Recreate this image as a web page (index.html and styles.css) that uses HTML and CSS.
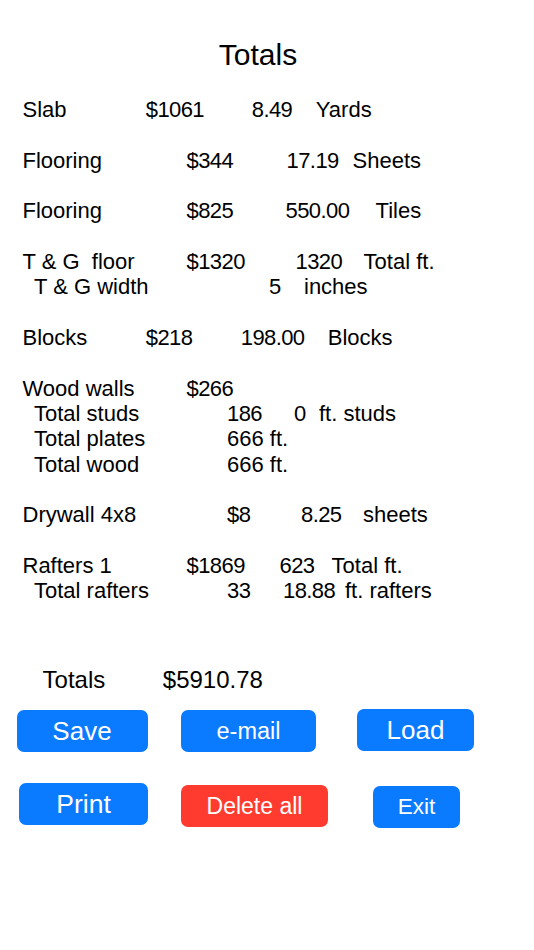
FILE: index.html
```html
<!DOCTYPE html>
<html>
<head>
    <meta charset="UTF-8">
    <title>Totals</title>
    <link rel="stylesheet" href="styles.css">
</head>
<body>
    <div class="page">
        <h1 class="title">Totals</h1>

        <!-- Lista de materiales: cada bloque es un grupo separado por una linea en blanco -->
        <div class="lista">
            <div class="grupo">
                <div class="linea">
                    <span class="celda w123">Slab</span>
                    <span class="celda num w106">$1061</span>
                    <span class="celda num w64">8.49</span>
                    <span class="celda">Yards</span>
                </div>
            </div>
            <div class="grupo">
                <div class="linea">
                    <span class="celda w164">Flooring</span>
                    <span class="celda num w100">$344</span>
                    <span class="celda num w66">17.19</span>
                    <span class="celda">Sheets</span>
                </div>
            </div>
            <div class="grupo">
                <div class="linea">
                    <span class="celda w164">Flooring</span>
                    <span class="celda num w99">$825</span>
                    <span class="celda num w90">550.00</span>
                    <span class="celda">Tiles</span>
                </div>
            </div>
            <div class="grupo">
                <div class="linea">
                    <span class="celda w164">T &amp; G&nbsp; floor</span>
                    <span class="celda num w109">$1320</span>
                    <span class="celda num w68">1320</span>
                    <span class="celda">Total ft.</span>
                </div>
                <div class="linea sub">
                    <span class="celda w235">T &amp; G width</span>
                    <span class="celda num w35">5</span>
                    <span class="celda">inches</span>
                </div>
            </div>
            <div class="grupo">
                <div class="linea">
                    <span class="celda w123">Blocks</span>
                    <span class="celda num w95">$218</span>
                    <span class="celda num w87">198.00</span>
                    <span class="celda">Blocks</span>
                </div>
            </div>
            <div class="grupo">
                <div class="linea">
                    <span class="celda w164">Wood walls</span>
                    <span class="celda num">$266</span>
                </div>
                <div class="linea sub">
                    <span class="celda w193">Total studs</span>
                    <span class="celda num w67">186</span>
                    <span class="celda num w25">0</span>
                    <span class="celda">ft. studs</span>
                </div>
                <div class="linea sub">
                    <span class="celda w193">Total plates</span>
                    <span class="celda">666 ft.</span>
                </div>
                <div class="linea sub">
                    <span class="celda w193">Total wood</span>
                    <span class="celda">666 ft.</span>
                </div>
            </div>
            <div class="grupo">
                <div class="linea">
                    <span class="celda w205">Drywall 4x8</span>
                    <span class="celda num w74">$8</span>
                    <span class="celda num w62">8.25</span>
                    <span class="celda">sheets</span>
                </div>
            </div>
            <div class="grupo">
                <div class="linea">
                    <span class="celda w164">Rafters 1</span>
                    <span class="celda num w93">$1869</span>
                    <span class="celda num w52">623</span>
                    <span class="celda">Total ft.</span>
                </div>
                <div class="linea sub">
                    <span class="celda w193">Total rafters</span>
                    <span class="celda num w56">33</span>
                    <span class="celda num w62">18.88</span>
                    <span class="celda">ft. rafters</span>
                </div>
            </div>
        </div>

        <div class="totales">
            <span class="totales-label">Totals</span>
            <span>$5910.78</span>
        </div>

        <div class="botones">
            <button class="btn btn-save">Save</button>
            <button class="btn btn-email">e-mail</button>
            <button class="btn btn-load">Load</button>
        </div>
        <div class="botones fila2">
            <button class="btn btn-print">Print</button>
            <button class="btn btn-delete">Delete all</button>
            <button class="btn btn-exit">Exit</button>
        </div>
    </div>
</body>
</html>
```

FILE: styles.css
```css
body {
    margin: 0;
    background-color: #ffffff;
    color: #000000;
    font-family: "Liberation Sans", Arial, sans-serif;
}

.page {
    width: 534px;
    height: 950px;
}

.title {
    margin: 37px 0 0 0;
    width: 516px;
    font-size: 30px;
    font-weight: normal;
    line-height: 36px;
    text-align: center;
}

/* Lista de materiales */
.lista {
    margin-top: 24px;
    display: flex;
    flex-direction: column;
    gap: 25.33px;
}

.linea {
    display: flex;
    padding-left: 22.5px;
    height: 25.33px;
    font-size: 22px;
    line-height: 25.33px;
    white-space: pre;
}

.linea.sub {
    padding-left: 34px;
}

.celda {
    flex-shrink: 0;
}

/* los digitos de la fuente original son algo mas estrechos */
.num {
    letter-spacing: -0.6px;
}

/* anchos de columna (hasta el inicio de la siguiente) */
.w25 { width: 25px; }
.w35 { width: 35px; }
.w52 { width: 52px; }
.w56 { width: 56px; }
.w62 { width: 62px; }
.w64 { width: 64px; }
.w66 { width: 66px; }
.w67 { width: 67px; }
.w68 { width: 68px; }
.w74 { width: 74px; }
.w87 { width: 87px; }
.w90 { width: 90px; }
.w93 { width: 93px; }
.w95 { width: 95px; }
.w99 { width: 99px; }
.w100 { width: 100px; }
.w106 { width: 106px; }
.w109 { width: 109px; }
.w123 { width: 123.3px; }
.w164 { width: 164.1px; }
.w193 { width: 193px; }
.w205 { width: 204.5px; }
.w235 { width: 235px; }

/* Total general */
.totales {
    display: flex;
    margin-top: 62px;
    padding-left: 42.6px;
    font-size: 24px;
    line-height: 28px;
}

.totales-label {
    width: 120.2px;
}

/* Botones */
.botones {
    display: flex;
    align-items: flex-start;
    margin-top: 15px;
}

.botones.fila2 {
    margin-top: 31px;
}

.btn {
    flex-shrink: 0;
    height: 42px;
    padding: 0;
    border: none;
    border-radius: 7px;
    background-color: #0a7aff;
    color: #ffffff;
    font-family: "Liberation Sans", Arial, sans-serif;
    line-height: 42px;
    text-align: center;
    cursor: pointer;
}

.btn-save {
    margin: 1px 0 0 16.5px;
    width: 131px;
    font-size: 26px;
}

.btn-email {
    margin: 1px 0 0 33.5px;
    width: 135px;
    font-size: 23.5px;
}

.btn-load {
    margin-left: 41px;
    width: 117px;
    font-size: 26px;
}

.btn-print {
    margin-left: 19px;
    width: 129px;
    font-size: 26.5px;
}

.btn-delete {
    margin: 2px 0 0 33px;
    width: 147px;
    background-color: #ff3b30;
    font-size: 23px;
}

.btn-exit {
    margin: 3px 0 0 45px;
    width: 87px;
    font-size: 22.5px;
}
```
